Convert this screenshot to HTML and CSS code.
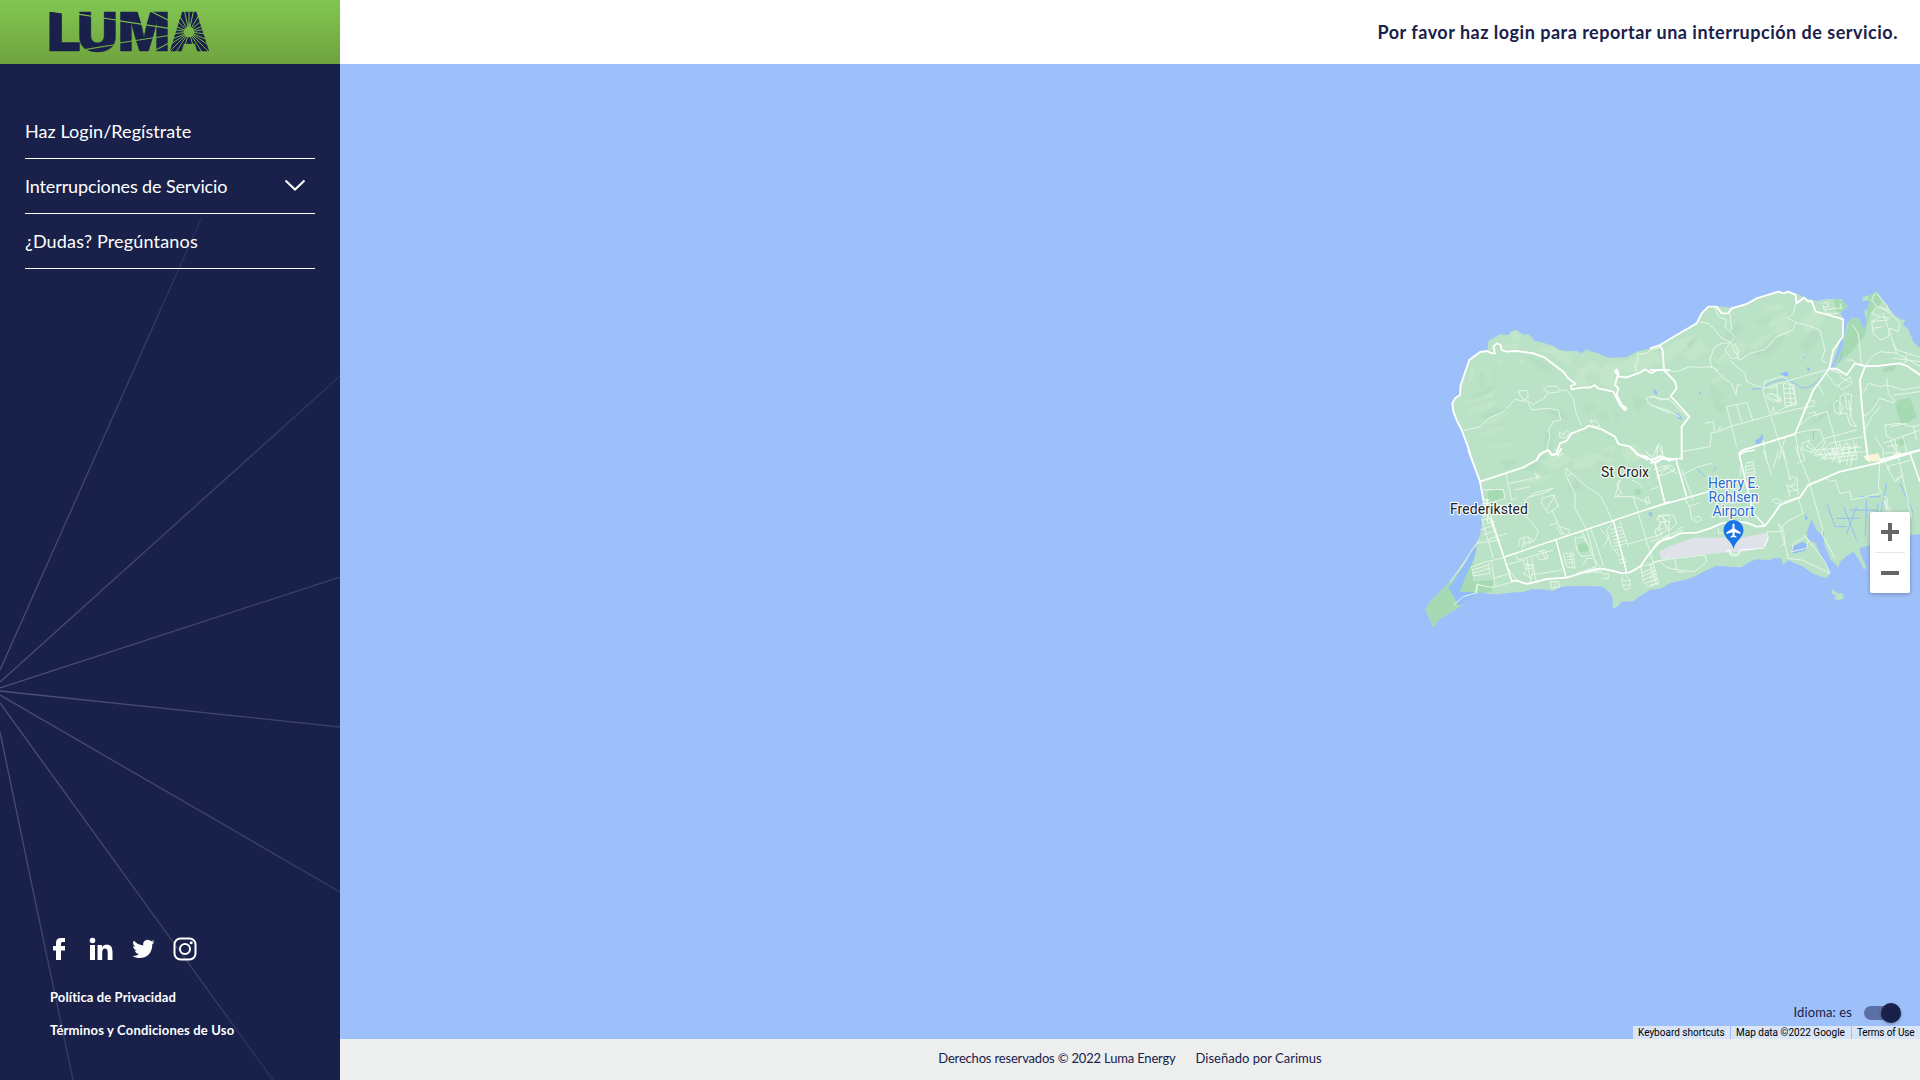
FILE: index.html
```html
<!DOCTYPE html>
<html lang="es">
<head>
<meta charset="utf-8">
<title>LUMA</title>
<link rel="stylesheet" href="styles.css">
</head>
<body>
<div class="app">
  <aside class="sidebar">
    <svg class="rays" viewBox="0 64 340 1016" aria-hidden="true">
      <defs><radialGradient id="fade" gradientUnits="userSpaceOnUse" cx="0" cy="690" r="530"><stop offset="0" stop-color="#4a5174"/><stop offset=".6" stop-color="#3a4166"/><stop offset="1" stop-color="#242c55"/></radialGradient></defs>
      <g stroke="url(#fade)" stroke-width="1.3">
        <path d="M0 670L201 219M0 682L340 376M0 688L340 577M0 691L340 727M0 695L340 892M0 703L273 1080M0 732L35 900L73 1080"/>
      </g>
    </svg>
    <div class="brand">
      <svg class="logo" viewBox="0 0 162 42" role="img" aria-label="LUMA">
        <defs>
          <mask id="cuts" maskUnits="userSpaceOnUse" x="-10" y="-20" width="190" height="80">
            <rect x="-10" y="-20" width="190" height="80" fill="#fff"/>
            <path d="M-1 -1H15V3L-1 .500Z" fill="#000"/>
            <path d="M28 3.200L66 9M68 9.700L119 17.300M36 38.300L66 33.500M69 32L119 24.500M100 0L119 9.500M100 42L119 32" stroke="#000" stroke-width="1.2"/>
            <g stroke="#000" stroke-width="1">
              <path d="M139 21V0M139 21L143.500 0M139 21L134.500 0M139 21L149 4M139 21L129 4M139 21L152 9M139 21L126 9M139 21L155 14M139 21L123 14M139 21L157 18M139 21L121 18M139 21L157 23M139 21L121 23M139 21L158 29M139 21L120 29M139 21L160 35M139 21L118 35M139 21L159 41M139 21L119 41M139 21L152 41M139 21L126 41M139 21L145 41M139 21L133 41"/>
            </g>
            <circle cx="139" cy="21" r="5.200" fill="#000"/>
          </mask>
        </defs>
        <g class="logo-letters" mask="url(#cuts)">
          <text x="-3" y="40" textLength="34" lengthAdjust="spacingAndGlyphs">L</text>
          <text x="27" y="40" textLength="41" lengthAdjust="spacingAndGlyphs">U</text>
          <text x="68" y="40" textLength="52" lengthAdjust="spacingAndGlyphs">M</text>
          <text x="119" y="40" textLength="41" lengthAdjust="spacingAndGlyphs">A</text>
        </g>
      </svg>
    </div>
    <nav class="menu">
      <a class="menu-item"><span class="t-login">Haz Login/Regístrate</span></a>
      <a class="menu-item"><span class="t-outage">Interrupciones de Servicio</span>
        <svg class="chevron" viewBox="0 0 22 13"><path d="M1.500 1.500L11 10.500L20.500 1.500" fill="none" stroke="#fff" stroke-width="2"/></svg></a>
      <a class="menu-item"><span class="t-faq">¿Dudas? Pregúntanos</span></a>
    </nav>
    <div class="side-foot">
      <div class="social">
        <svg class="facebook" viewBox="0 0 24 24"><path d="M6 23V13.500H3V9H6V6Q6 1 11 1H15V5H12.500Q11 5 11 6.500V9H15V13.500H11V23Z"/></svg>
        <svg viewBox="0 0 24 24"><circle cx="3.500" cy="3.500" r="2.800"/><path d="M1 8H6V23H1ZM8.500 8H13V10Q14.500 7.500 17.500 7.500Q23.500 7.500 23.500 14.500V23H18.700V15.500Q18.700 11.500 16 11.500Q13.200 11.500 13.200 15.500V23H8.500Z"/></svg>
        <svg viewBox="0 0 24 24"><path d="M23.600 4.900c-.9.400-1.700.6-2.600.7 1-.5 1.700-1.400 2-2.500-.9.500-1.800.9-2.900 1.100a4.600 4.600 0 0 0-7.800 4.200C8.500 8.200 5.200 6.400 2.900 3.600a4.600 4.600 0 0 0 1.400 6.100c-.7 0-1.400-.2-2.100-.6 0 2.300 1.600 4.200 3.700 4.600-.7.200-1.400.2-2.100.1.600 1.800 2.300 3.100 4.300 3.200A9.300 9.300 0 0 1 1.500 19c7.700 4.700 20 1.500 19.800-11.700.9-.7 1.700-1.500 2.300-2.400Z"/></svg>
        <svg viewBox="0 0 24 24"><rect x="1.500" y="1.500" width="21" height="21" rx="6" fill="none" stroke="#fff" stroke-width="2"/><circle cx="12" cy="12" r="5" fill="none" stroke="#fff" stroke-width="2"/><circle cx="18.200" cy="5.800" r="1.500"/></svg>
      </div>
      <a class="t-privacy">Política de Privacidad</a>
      <a class="t-terms">Términos y Condiciones de Uso</a>
    </div>
  </aside>
  <div class="content">
    <header class="topbar"><span class="t-head">Por favor haz login para reportar una interrupción de servicio.</span></header>
    <main class="map">
      <svg class="map-canvas" viewBox="340 64 1580 975">
        <defs>
          <path id="coast" d="M262 243L240 246 208 270 196 305 182 345 180 375 165 385 157 400 160 425 172 455 185 480 200 520 216 568 240 635 248 690 245 740 245 780 232 815 205 860 180 890 160 925 130 955 90 995 76 1020 94 1057 97 1070 103 1068 110 1055 130 1040 180 1010 220 980 240 965 265 972 295 973 330 968 370 965 395 958 430 958 460 962 480 952 500 949 560 948 610 950 630 970 638 985 638 1014 650 1012 665 995 700 993 725 975 750 960 785 955 810 940 850 930 880 922 910 905 950 887 990 890 1025 892 1050 875 1070 868 1110 870 1120 865 1145 865 1148 885 1165 871 1210 890 1240 912 1280 925 1290 910 1278 885 1260 850 1245 818 1225 808 1220 790 1230 760 1235 750 1250 780 1270 800 1275 830 1292 870 1308 883 1315 895 1320 875 1340 858 1360 845 1380 873 1390 898 1400 895 1383 855 1378 835 1410 825 1530 795 1560 792V235L1540 215 1530 190 1523 175 1508 165 1516 150 1500 147 1485 135 1450 95 1430 63 1415 75 1390 80 1386 92 1408 92 1405 115 1392 125 1400 150 1395 180 1385 165 1375 145 1355 143 1340 165 1330 210 1320 250 1300 290 1292 295 1310 250 1330 180 1328 140 1320 130 1345 108 1335 103 1325 88 1285 87 1250 93 1220 85 1185 68 1135 65 1105 75 1070 85 1040 100 990 113 950 108 925 110 905 130 890 160 830 195 780 225 750 235 710 245 680 262 625 263 590 248 575 245 560 238 545 250 530 243 500 243 480 240 460 228 430 218 405 213 385 192 370 195 350 180 335 183 325 195 300 193 265 213Z"/>
          <clipPath id="land"><use href="#coast"/></clipPath>
          <filter id="soft" x="-20%" y="-20%" width="140%" height="140%"><feGaussianBlur stdDeviation="3"/></filter>
        </defs>
        <g transform="translate(1400 270) scale(.333333)">
          <use href="#coast" class="ground"/>
          <path class="ground" d="M1295 956L1313 970 1328 970 1331 985 1318 991 1303 987 1308 977 1296 970Z"/>
          <g clip-path="url(#land)">
            <path class="park" d="M60 1080L60 980 200 880 220 880 218 935 282 930 275 965 240 970 110 1080ZM264 665L285 655 310 665 312 690 285 695 262 690ZM535 823L560 818 570 832 560 845 537 845ZM700 660L720 657 725 670 710 676ZM1292 290L1325 240 1350 140 1400 150 1405 65 1430 65 1445 100 1410 130 1395 195 1360 240 1325 270ZM1483 395L1530 383 1550 440 1505 470ZM1300 85L1345 100 1335 130 1310 125ZM1485 515L1515 504 1520 520 1493 530ZM1450 295L1490 285 1480 302 1450 307Z"/>
            <g class="hill-light" filter="url(#soft)">
              <path d="M330 185l30 0 5 25-25 0ZM300 230l45-15 20 15-45 10ZM400 235l60-5 60 25-30 12-50-17ZM460 265l50 0 20 30-40-15ZM530 300l45-30 30 25-40 60-50-15ZM600 300l40-30 25 20-20 80-45-35ZM660 280l40-20 60-20 30 30-70 40-60-5ZM190 395l70-25 30-20-10 30-80 25ZM205 420l90-30-20 25-75 15ZM240 460l60-30 40-5-60 35ZM225 500l70-30 30 0-60 28ZM270 530l70-15-10 15-50 8ZM210 300l15-10-10 40-10 20ZM290 265l25 10-20 15ZM350 265l25-5-10 25ZM780 250l50-40 60-20-30 40-60 50ZM850 250l50-40 30 30-60 35ZM940 280l60-60 30-10 10 30-70 40ZM1030 230l80-40 50-40 15 40-80 50ZM1080 120l50-20 30 10-40 15ZM1100 160l60-40 10 30-60 25ZM1200 150l40-30 40 30-60 40ZM930 330l50-20-10 20-40 15ZM420 575l60-35 40 30-60 30ZM520 570l60-20 70 20-50 20-80 10ZM660 540l50-20 30 40-60 20ZM600 540l50-15-10 25ZM360 640l60-20 50-10-50 30Z"/>
            </g>
            <g class="hill-dark" filter="url(#soft)">
              <path d="M240 310l12 0-5 40-10 0ZM280 300l15 20-10 10ZM215 380l60-30 20 5-70 35ZM240 440l60-25 20 5-60 30ZM380 260l50 15 30 35-40-15ZM430 410l50 10 30 30-60-15ZM440 480l20 10-10 60-15-10ZM550 400l40 10-30 20ZM590 440l30-20 5 30ZM700 380l40 10-30 40ZM550 320l40-15-20 35ZM640 420l20 10-10 30ZM930 340l40 30-20 40-15-30ZM970 210l40-50 20 10-40 60ZM1060 250l60-60 40 10-60 60ZM1200 230l40-50 20 20-40 50ZM1060 160l50-20-10 25ZM370 600l40-30 10 30ZM300 570l60 0-40 30ZM500 660l30-30 15 30ZM570 590l40-20 20 20ZM940 400l50 5-30 25ZM1230 460l90-80 20 0-90 80ZM860 220l30-20-20 40Z"/>
            </g>
            <g class="water">
              <path d="M1215 750l3-22 5 20ZM1172 833l35-18 14 8-2 18-39 10ZM145 950l12-10 18-30 20-30 30-50 6 2-10 38-20 40-22 55 50 2-7 20-45 20-12-20ZM1067 510l12-5 8-15 2 15-8 15-15 2ZM1140 310l20-5 8 10-15 5ZM1222 290l6 3 2 10-9-4ZM825 430l12 2 10 18-10-4ZM762 357l10 8-2 10-8-5ZM1492 730h10l-3 12ZM748 725l10 5-3 10-9-5ZM895 365l8 3-2 7ZM1210 260l6 0 0 8Z"/>
              <path class="creek" d="M1085 355C1110 340 1130 325 1160 330S1200 365 1230 350 1265 315 1300 292 1320 250 1332 190M1240 482v25M1055 358l30-3M890 595l25 25M940 605l8-15M1270 775v40M1460 640l-30 150-30 70M1500 640l40 90M1280 700l25 70 35 0M1310 745h70M1330 710l40 100M1370 710l-30 80M1400 690l-5 110M1440 680l-60 0M1430 720l-80 0M1435 700l-15 90M1415 750l60 25"/>
            </g>
            <path class="runway" d="M778 845L805 830 880 803 1030 802 1100 788 1105 810 1085 835 1030 845 970 848 785 867Z"/>
            <path class="town" d="M1390 558L1435 550 1445 575 1400 573ZM1480 552L1500 545 1508 556 1478 562Z"/>
            <g class="town-roads">
              <path d="M246 690h22M246 700h22M248 712h22M252 690v50M262 685v70"/>
            </g>
          </g>
        </g>

        <!-- north-west -->
        <g transform="translate(1400 270) scale(.333333)">
          <path class="minor" d="M192 482L240 470 265 445 312 425 345 388 375 395 360 375 355 362 382 362 385 380 372 390M378 390L400 403 435 382 445 365 430 360 440 350 470 348 480 362 500 360 520 385 528 430 545 468M445 370L480 365M382 395L395 420 440 415 475 420 482 450 460 455 445 480 450 500 440 540M478 485L490 495 500 480 510 490 495 505 478 500ZM570 450L590 455 600 470 580 470ZM465 535L475 560 490 550M710 305L705 285 715 270 712 252 740 250 750 240 775 235M810 385L780 390 765 378 740 383 745 400 775 415 810 430M735 540L745 555 760 560 775 522 785 530 790 560"/>
          <path class="major" d="M262 243L240 246 208 270 196 305 182 345 180 375 165 385 157 400 160 425 172 455 185 480 200 520 216 570M262 243L275 250 285 250 280 230 290 220 302 225 305 240 320 245 350 243 400 250 435 263 470 290 490 305 505 325 527 342 512 348 515 358 550 352 570 353 583 345 595 355 640 365 660 405 675 420 680 415 665 405 650 375 655 355 645 345 655 310 650 298 645 305 658 320 680 322 720 308 735 298 755 310 770 300 810 300M410 570L420 553 445 540 455 555 470 550 480 520 500 512 515 490 555 475 565 467 605 478 645 500 655 522 690 530 715 555 745 570M765 570L780 558 800 565 810 575"/>
        </g>
        <!-- north-east -->
        <g transform="translate(1650 270) scale(.333333)">
          <path class="minor" d="M0 235L28 232M145 155L175 160 195 180 215 205 240 215 255 245 270 270 300 250 345 238 380 200 430 180 437 157 470 165 510 180 515 200 525 240 515 270 530 280M437 100L430 130 415 145 437 157M195 110L205 140 230 150 225 170 255 200 240 220 225 240 245 265 262 265 265 240 250 220M240 130L245 180M185 295L180 265 195 230 215 220 245 218M45 302L80 305 120 290 145 292 190 290 215 320 245 340 258 375 262 345 275 345M240 270L255 285 285 310 290 335 340 355 440 325 535 298M0 380L60 390 110 440M0 405L50 420 90 440M340 360L345 335 400 318 425 345 440 400 400 415 375 430M338 362L360 430 385 510 405 570M365 430L370 410 375 430M350 375q20-10 30 8 25 8-5 12-25-5-25-20M360 370l30 10 5 15-30-8-10-8M380 340l5 60M400 340L405 408 438 405 432 345ZM402 355h30M403 370h32M404 385h34M405 398h34M418 342l6 65M380 350L355 355M180 490L205 485 240 470 365 435 435 418 490 408 495 395 485 390 470 400 460 425M230 410L290 397 308 450M230 410L245 470 260 530M260 402L275 455M165 460L190 455 195 485M95 545L180 530 185 490M205 482l5-12 10 10M20 570L22 525 35 545 40 570M0 565L95 565M340 510L350 570M405 505L385 570M435 490L450 570M435 490L480 480 510 478 525 520 500 545 470 530 480 510 455 520 460 540 500 550M450 465L480 440 530 425M530 420L550 490 570 570M475 430L495 425 500 440M505 340L520 375M530 310L560 350 600 320 605 340 575 360 565 345M540 300L570 310 575 325 600 335M590 270L610 270 615 285M570 380L585 370 605 375 600 440 620 470 600 465 590 430 570 430ZM585 375l5 40 20 5M595 390l10 50M550 405L560 390 580 410 570 435 555 425ZM607 165L625 190 630 240 635 290M675 70L665 90 680 110 665 130 690 140 665 155 670 190 690 210 715 200 720 175 745 185 750 160 720 130 710 105 680 70M680 110L715 120M690 140l30 5M665 155l50-5M668 175l30-5M700 130L740 250M720 130L690 110M645 290L665 260 690 245 740 250 810 290M730 220L740 240 810 262M730 265L810 275M770 255l-5 25M645 290L680 290 710 285M640 370L655 340 690 350 710 345 760 360 810 350M710 325L715 370 740 400M730 375L810 365M645 440L670 415 690 385 735 400M640 490L665 440 690 410M640 440L650 430M705 465L750 460 785 470 810 465M705 465L710 500 735 510 745 570M520 100q20-10 15 10-20 0-10 10 30-8 50-5l-5-15M520 105q0 20 15 25h30M190 295l15 5M675 500L700 540 700 570M720 470l50-10M700 520L810 480M760 500L770 545M790 470L800 510M480 550L525 505 620 480M500 560L540 520 640 500M510 570L545 545 635 530M545 530L555 570M570 520L585 570M590 515L605 570M610 510L622 570M520 530L530 570M540 555L640 545M720 510l15 30 10-20M710 530l35-5M705 550l40-5"/>
          <path class="major" d="M0 235L30 225 80 195 140 160 155 130 175 110 200 110 215 130 235 130 245 115 290 102 320 85 385 65 400 70 415 65 437 75 440 100 462 83 475 95 485 93 497 125 530 133 580 148 578 200 550 240 540 285 535 300 490 360 465 420 435 492 280 540 268 548 270 570M0 300L42 300 38 240 28 225M42 300L75 335 80 355 62 378 118 440 95 470 95 570M0 570L30 560 70 570M535 295L560 297 590 315 615 280 645 288 690 287 750 280 775 290 810 315M645 290L630 330 635 400 645 500 655 570M690 570L810 540"/>
        </g>
        <!-- south-west -->
        <g transform="translate(1400 450) scale(.333333)">
          <path class="minor" d="M318 70L335 150 350 145M330 100L420 80 405 70 415 88M345 120L390 110M370 155L400 130 460 115 430 130 390 140M425 145L460 135 475 170 445 190 425 160ZM455 180L485 245 500 260 510 240 480 230M450 225l20-5M370 190L410 235 415 250 400 275 395 265M355 290L360 265 385 260 400 275 370 280 365 295M370 262l5 25M385 262l5 20M495 75L500 55 515 70 500 80 525 130 525 175 545 210 560 240M515 70L560 110 600 135 625 185 635 210M465 135L440 180M250 120L310 118 315 145 280 155M700 140L715 190 760 340M645 140L660 90 650 105 665 130 645 140 700 140 750 160 745 140 735 145 740 165M695 90L715 100 725 110M750 120L775 110M800 55L770 85M770 65L810 50M685 282L770 258 790 250M810 195L775 200 780 230 765 240 770 260 800 240M790 200L800 240M780 215h30M245 205L280 325M262 190L300 290M260 270L320 250M230 280L300 270M240 240L285 225M250 255L290 240M300 290L310 320M215 350L260 335 315 322M215 350L220 378 270 370 265 338M217 360L267 345M219 370L269 355M275 335L285 410M230 430L232 402 250 408 280 412 340 395M280 385L330 370M320 350L350 390M315 345L375 330M345 310L355 330 460 300M370 335L380 360 370 370 395 385 400 350 380 340M375 345h25M375 355h25M380 325l12 70M395 325L410 400M395 375L485 360M410 315L420 330 445 325 435 300 415 305M425 300l12 28M490 310L500 350 525 355 520 310 495 310M500 320l20-3M500 330l20-3M500 340l20-3M510 310l10 45M525 260L530 300 545 320 575 315M545 240L580 320M560 235L590 350M570 230L605 330 610 350M550 345L560 325 580 325 600 350M530 265L550 260 560 280M450 395L475 395 480 410 455 415 450 395M465 395v20M560 370L600 360 610 375 625 370 625 385 605 385M530 370L590 350M580 350l5 18 18-2M600 235L625 265 610 290M640 215L620 240 635 290 660 320M660 215L685 290M630 240L665 230M632 250L670 240M635 260L672 250M638 270L675 260M640 280L680 270M642 290L680 280M646 300L655 298M655 330L680 325M658 340L682 335M668 375L665 400 675 420 690 415 690 390 675 375M667 392h22M668 405h22M722 350L730 395 745 410 775 400 770 380 760 340M725 370L765 350M727 380L768 360M730 390L770 372M738 400L772 385M720 350L760 340 810 320M470 230L485 255M250 210L270 205M260 220l25-5"/>
          <path class="major thin" d="M315 320L810 155M468 270L498 382M640 212L680 368M272 200L336 395M765 40L795 160"/>
          <path class="major" d="M205 0L240 95 250 150M240 95L370 52 410 30 420 12 445 0 455 15 475 12 485 -5M690 -10L715 15 740 20 765 40 790 25 810 28M333 393L350 392 380 402 410 395 440 387 500 383 560 365 600 355 640 363 665 370 690 367 720 350 745 315 770 285 790 268 810 260"/>
          <path class="minor" d="M160 465L190 440 225 430 232 402M238 270L215 300 185 350 150 395"/>
        </g>
        <!-- south-east -->
        <g transform="translate(1650 450) scale(.333333)">
          <path class="minor" d="M30 65L45 50 80 70M95 75L145 50 185 40M105 145L120 175 125 210M115 170L145 160M95 60L130 150M285 80L288 40 310 35 315 70 290 80M288 50l22-5M289 60l22-5M288 70l24-5M10 60L35 50 60 45 75 60 40 75 20 80M270 80L275 30M20 210L30 195 70 195 80 220 60 240 40 215 25 230 35 255M0 275L100 240M25 195l30 20M60 200l-5 50M20 240L40 235M130 210q15-20 25-5-10 20-25 5M80 240L100 230M205 235L205 250 220 248M340 0L365 75M385 0L370 55M400 0L420 90M435 -10L480 100M450 -10L465 30 440 40M480 -20L520 25 540 10M415 90L430 80 440 90 420 110 440 120M410 110l30-5M415 125l30-5M410 100l10 40M440 80l5 55M365 150q15-10 30 5-10 15-30-5M400 155L450 140M445 145L460 190 420 210 400 225 395 245 350 245M385 220L400 240 405 280 390 290M385 220L395 250 415 325 455 330 500 350 540 370 525 335 490 290 465 260 450 270 430 280 425 305 470 295 475 270 460 255M480 105L510 210 520 240 515 250 555 325M480 105L530 85 540 95 555 90 570 130 600 125 605 150 690 130M540 20L555 -10M550 30L570 -20M570 40L585 -20M590 45L600 -20M600 50L620 -20M500 0L625 -10M490 15L620 5M530 25L620 15M560 35L620 27M510 5l15 25M530 0l20 35M550 -5l20 45M645 0L660 40M690 30L685 110 695 130M700 30L720 60M710 50L785 30M710 50L735 95 760 75 735 90M745 20L785 205M700 140q20-5 10 30 15 0 10 15M700 150l18 35M705 145l5 40M30 335L50 352 75 358 135 365 170 335 165 315M30 335L25 330M0 350L10 335 80 325 165 315M75 328l5 30M80 365L105 367M0 340L20 405M0 365l15-5M0 375l17-5M0 385l18-5M0 395l20-5M0 405l20-5M230 305L240 300 245 310 265 315 270 300M350 245L355 265 345 290"/>
          <path class="major" d="M0 310L25 275 60 265 90 250 140 248 180 235 215 220 260 215 290 218 320 230 345 228 370 195 390 165 450 142 475 105 570 65 690 38 810 0"/>
          <path class="major thin" d="M0 175L175 125M0 40L40 25 55 30 95 25M78 30L110 140M15 40L45 160M315 0L285 5 268 15 310 190 345 228M780 10L810 95"/>
          <path class="runway-road" d="M225 305L235 300 245 318 265 315 270 300 340 295 355 260M240 300v15"/>
        </g>

        <g class="labels">
          <text x="1601" y="477" textLength="48">St Croix</text>
          <text x="1450" y="514" textLength="78">Frederiksted</text>
          <g class="airport"><text x="1733.500" y="488" text-anchor="middle" textLength="51">Henry E.</text><text x="1733.500" y="502" text-anchor="middle" textLength="50">Rohlsen</text><text x="1733.500" y="516" text-anchor="middle" textLength="42">Airport</text></g>
        </g>
        <path d="M1733.500 549C1732 541 1723.500 538 1723.500 530A10 10 0 0 1 1743.500 530C1743.500 538 1735 541 1733.500 549Z" fill="#1a73e8"/>
        <path d="M1732.500 524.500q1-2 2 0v4l6 3.800v1.700l-6-1.700v3l2 1.500v1l-3-.8-3 .8v-1l2-1.500v-3l-6 1.700v-1.700l6-3.800Z" fill="#fff"/>
      </svg>
      <div class="zoom"><button class="plus" aria-label="+"></button><i></i><button aria-label="-"></button></div>
      <div class="language"><span class="t-lang">Idioma: es</span><span class="switch"></span></div>
      <div class="credits"><span class="c1"><b>Keyboard shortcuts</b></span><span class="c2"><b>Map data ©2022 Google</b></span><span class="c3"><b>Terms of Use</b></span></div>
    </main>
    <footer class="footer"><span class="t-rights">Derechos reservados © 2022 Luma Energy</span><span class="t-design">Diseñado por Carimus</span></footer>
  </div>
</div>
</body>
</html>
```
FILE: styles.css
```css
* { box-sizing: border-box; }
body { margin: 0; font-family: Lato, "Open Sans", sans-serif; color: #19214b; }
.app { display: flex; width: 1920px; height: 1080px; overflow: hidden; }
.app span, .app a { white-space: nowrap; }

.sidebar { position: relative; width: 340px; height: 1080px; background: #19214b; color: #fff; display: flex; flex-direction: column; }
.rays { position: absolute; left: 0; top: 64px; width: 340px; height: 1016px; fill: none; }
.brand { height: 64px; padding: 11px 0 0 50px; background: linear-gradient(#82c652, #6fa33e); }
.logo { display: block; width: 162px; height: 42px; overflow: visible; }
.logo-letters { fill: #19214b; stroke: #19214b; stroke-width: .5px; font: 900 53px Inter, sans-serif; }
.menu { position: relative; margin: 40px 25px 0; }
.menu-item { height: 55px; padding-bottom: 1px; border-bottom: 1px solid #fff; display: flex; align-items: center; justify-content: space-between; font-size: 18px; line-height: 24px; }
.t-login { letter-spacing: .06px; }
.t-outage { letter-spacing: -.13px; }
.t-faq { letter-spacing: .17px; }
.chevron { width: 22px; height: 13px; margin-right: 9px; }
.side-foot { position: relative; margin-top: auto; padding: 0 0 40px 50px; display: flex; flex-direction: column; align-items: flex-start; font-size: 13px; line-height: 19px; font-weight: 700; }
.social { display: flex; gap: 18px; margin-bottom: 27px; }
.social svg { width: 24px; height: 24px; fill: #fff; }
.social .facebook { margin-right: -3px; }
.t-privacy { margin-bottom: 14px; letter-spacing: .1px; }
.t-terms { letter-spacing: .17px; }

.content { width: 1580px; display: flex; flex-direction: column; }
.topbar { height: 64px; padding-right: 22px; background: #fff; display: flex; align-items: center; justify-content: flex-end; font-size: 18px; font-weight: 700; letter-spacing: .5px; }
.map { position: relative; height: 975px; background: #9dc0fa; overflow: hidden; }
.map-canvas { display: block; width: 1580px; height: 975px; }
.ground { fill: #bae2c6; }
.park { fill: #a5dab3; }
.hill-light { fill: #c8e8cd; opacity: .65; }
.hill-dark { fill: #add8bd; opacity: .5; }
.water { fill: #93bdf8; }
.creek { fill: none; stroke: #93bdf8; stroke-width: 3; }
.runway { fill: #dfe2e8; }
.town { fill: #fdf3d8; }
.minor, .major, .town-roads, .runway-road { fill: none; stroke-linejoin: round; }
.minor { stroke: #e9f7ec; stroke-width: 2.800; }
.town-roads { stroke: #fff; stroke-width: 3; }
.runway-road { stroke: #fff; stroke-width: 2.500; }
.major { stroke: #fff; stroke-width: 5.500; }
.thin { stroke-width: 4.500; }
.labels { font: 14px Roboto, sans-serif; fill: #222; stroke: #fff; stroke-width: 2.500px; stroke-opacity: .85; paint-order: stroke; stroke-linejoin: round; }
.airport { fill: #2d6bcf; }

.zoom { position: absolute; right: 10px; top: 448px; width: 40px; height: 81px; background: #fff; border-radius: 2px; box-shadow: 0 1px 4px rgba(0,0,0,.3); display: flex; flex-direction: column; align-items: center; }
.zoom i { width: 30px; height: 1px; background: #e6e6e6; }
.zoom button { width: 40px; height: 40px; border: 0; padding: 0; background: linear-gradient(#666,#666) center / 18px 4px no-repeat; }
.zoom .plus { background: linear-gradient(#666,#666) center / 18px 4px no-repeat, linear-gradient(#666,#666) center / 4px 18px no-repeat; }
.language { position: absolute; right: 20px; bottom: 16px; display: flex; align-items: center; gap: 12px; font-size: 13px; line-height: 20px; }
.t-lang { padding-bottom: 1px; letter-spacing: .1px; }
.switch { position: relative; width: 36px; height: 14px; border-radius: 7px; background: #5b70a4; }
.switch::after { content: ""; position: absolute; right: -1px; top: -3px; width: 20px; height: 20px; border-radius: 50%; background: #19214b; box-shadow: 0 1px 3px rgba(0,0,0,.35); }
.credits { position: absolute; right: 0; bottom: 0; display: flex; gap: 1px; height: 13px; font: 10px/14px Roboto, sans-serif; color: #000; }
.credits span { background: #d9e4f6; padding-left: 5px; }
.credits b { font-weight: 400; }
.c1 { width: 97px; } .c2 { width: 120px; } .c3 { width: 68px; letter-spacing: -.15px; }
.footer { height: 41px; background: #edefee; display: flex; align-items: center; justify-content: center; gap: 20px; font-size: 13px; padding-bottom: 3px; }
.t-rights { letter-spacing: -.18px; }
```
